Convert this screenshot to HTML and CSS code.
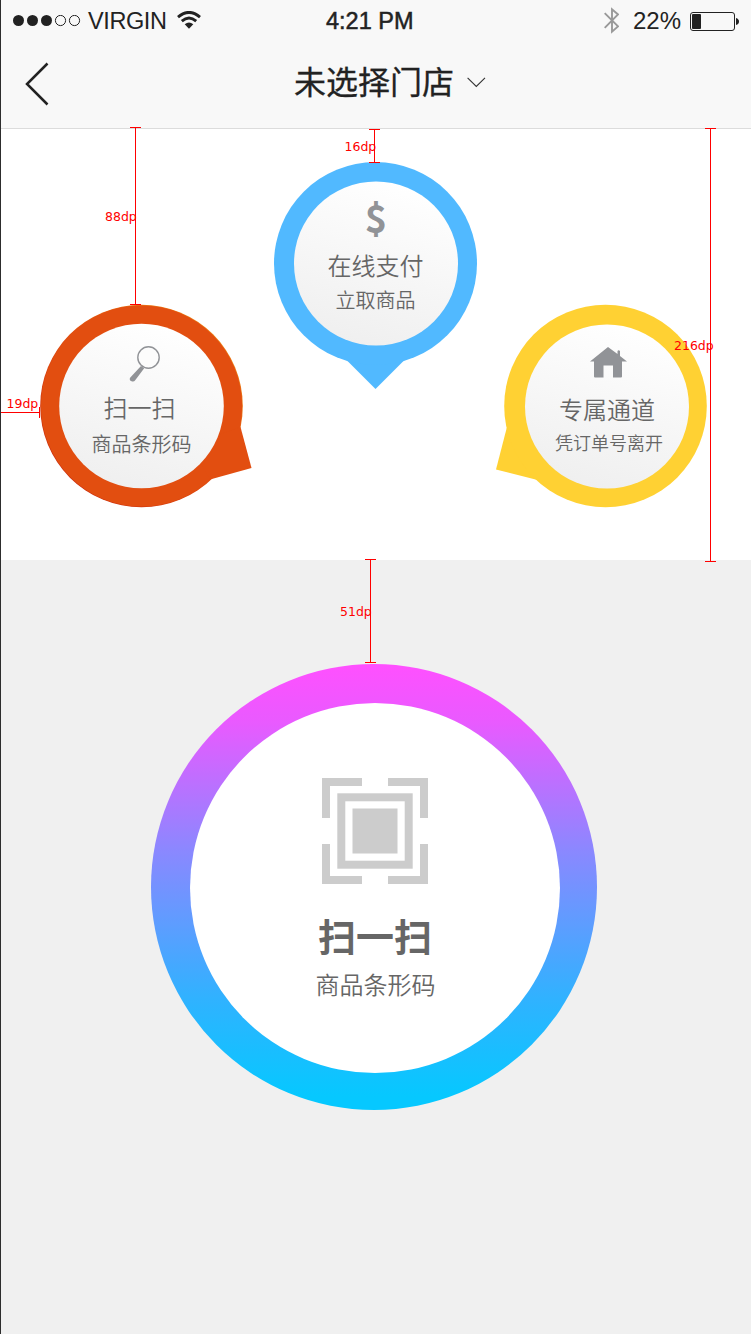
FILE: index.html
```html
<!DOCTYPE html>
<html lang="zh-CN">
<head>
<meta charset="utf-8">
<title>未选择门店</title>
<link rel="stylesheet" href="styles.css">
</head>
<body>
<div class="screen">
  <header class="header">
    <div class="status">
      <div class="status-left">
        <svg class="signal" width="68" height="12" viewBox="0 0 68 12"><g fill="#222"><circle cx="5.500" cy="5.500" r="5.500"/><circle cx="19.500" cy="5.500" r="5.500"/><circle cx="33.500" cy="5.500" r="5.500"/></g><g fill="none" stroke="#222"><circle cx="47.500" cy="5.500" r="5.100"/><circle cx="61.500" cy="5.500" r="5.100"/></g></svg>
        <span class="carrier">VIRGIN</span>
        <svg class="wifi" width="24" height="18" viewBox="0 0 24 18"><g fill="none" stroke="#222" stroke-width="2.900"><path d="M1 6.100Q12 -3.300 23 6.100"/><path d="M4.800 10.200Q12 4 19.200 10.200"/></g><path d="M7.700 13.200Q12 9.800 16.300 13.200L12 17.800Z" fill="#222"/></svg>
      </div>
      <span class="clock">4:21 PM</span>
      <div class="status-right">
        <svg class="bluetooth" width="15" height="27" viewBox="0 0 15 27"><path d="M.7 6.200L14 19.400L8 24.600V2.400L14 7.500L.7 20.800" fill="none" stroke="#999" stroke-width="1.900"/></svg>
        <span class="percent">22%</span>
        <svg class="battery" width="49" height="19" viewBox="0 0 49 19"><rect x=".5" y=".5" width="44" height="18" rx="2.500" fill="none" stroke="#222"/><rect x="2" y="2" width="9" height="15" rx="1" fill="#222"/><path d="M46 6Q49 7 49 9.500T46 13Z" fill="#222"/></svg>
      </div>
    </div>
    <nav class="nav">
      <svg class="back" width="24" height="44" viewBox="0 0 24 44"><path d="M22.500 1.500L2 22L22.500 42.500" fill="none" stroke="#222" stroke-width="2.500"/></svg>
      <h1 class="title">未选择门店</h1>
      <svg class="chevron" width="19" height="11" viewBox="0 0 19 11"><path d="M.6 .8L9.300 9.500L18 .8" fill="none" stroke="#333" stroke-width="1.100"/></svg>
    </nav>
  </header>

  <section class="pins">
    <div class="pin pin-scan">
      <svg class="pin-shape" width="203" height="203" viewBox="0 0 203 203">
        <defs>
          <linearGradient id="disc" x1=".65" y1="0" x2=".35" y2="1"><stop offset="0" stop-color="#fff"/><stop offset="1" stop-color="#efefef"/></linearGradient>
          <linearGradient id="edge" x1="1" y1="0" x2="0" y2="1"><stop offset=".1" stop-color="#f08a18"/><stop offset=".5" stop-color="#e14f10"/><stop offset=".9" stop-color="#c8280c"/></linearGradient>
        </defs>
        <circle cx="101.500" cy="101" r="101.300" fill="url(#edge)"/>
        <circle cx="101.500" cy="101" r="100.600" fill="#e24e10"/>
        <path d="M200.500 122L211.500 163L170 174.500L150 140Z" fill="#e24e10"/>
        <circle cx="101.500" cy="101" r="82.300" fill="url(#disc)"/>
      </svg>
      <svg class="icon" width="32" height="36" viewBox="0 0 32 36"><circle cx="19.500" cy="11.500" r="10.700" fill="#fcfcfc" stroke="#919397" stroke-width="1.400"/><path d="M12 20L1.300 31.500Q-.3 34 2.500 35.300Q5 36 6 34.500L15.200 22.300Z" fill="#919397"/></svg>
      <span class="label">扫一扫</span>
      <span class="note">商品条形码</span>
    </div>
    <div class="pin pin-pay">
      <svg class="pin-shape" width="203" height="203" viewBox="0 0 203 203">
        <path d="M66 193.500Q70 195.500 73 198.500L101.500 227L130 198.500Q133 195.500 137 193.500L101 150Z" fill="#51b9ff"/>
        <circle cx="101.500" cy="101.500" r="101.500" fill="#51b9ff"/>
        <circle cx="102" cy="101.500" r="82" fill="url(#disc)"/>
      </svg>
      <span class="dollar">$</span>
      <span class="label">在线支付</span>
      <span class="note">立取商品</span>
    </div>
    <div class="pin pin-lane">
      <svg class="pin-shape" width="203" height="203" viewBox="0 0 203 203">
        <path d="M2.700 123L-8 164.500L33.500 175L50 140Z" fill="#ffd133"/>
        <circle cx="101.500" cy="101" r="101.300" fill="#ffd133"/>
        <circle cx="103" cy="101.500" r="82" fill="url(#disc)"/>
      </svg>
      <svg class="icon" width="37" height="31" viewBox="0 0 37 31"><path d="M18 0L27.500 7V4Q28.500 2.500 30 4V9L37 14.500H32V29.500Q32 30.500 31 30.500H23V18.500H13.500V30.500H5Q4 30.500 4 29.500V14.500H0Z" fill="#919397"/></svg>
      <span class="label">专属通道</span>
      <span class="note">凭订单号离开</span>
    </div>
  </section>

  <main class="stage">
    <div class="ring">
      <div class="ring-face">
        <svg class="scan" width="106" height="106" viewBox="0 0 106 106"><g fill="none" stroke="#ccc" stroke-width="8"><path d="M4 40V4H40M66 4H102V40M102 66V102H66M40 102H4V66"/><rect x="19.300" y="19.300" width="67.400" height="67.400"/></g><rect x="30.500" y="30.500" width="45" height="45" fill="#ccc"/></svg>
        <span class="ring-label">扫一扫</span>
        <span class="ring-note">商品条形码</span>
      </div>
    </div>
  </main>

  <svg class="rulers" width="751" height="1334" viewBox="0 0 751 1334">
    <g fill="none" stroke="#f00" shape-rendering="crispEdges">
      <path d="M135.500 127V305M130 127.500H141M130 304.500H141"/>
      <path d="M374.500 129V163M369 129.500H380M369 162.500H380"/>
      <path d="M710.500 128V562M705 128.500H716M705 561.500H716"/>
      <path d="M370.500 559V663M365 559.500H376M365 662.500H376"/>
      <path d="M1 412.500H40M.5 407V418M39.500 407V418"/>
    </g>
    <g class="ruler-text">
      <text x="105" y="221">88dp</text>
      <text x="344.500" y="151">16dp</text>
      <text x="674" y="350">216dp</text>
      <text x="340" y="616">51dp</text>
      <text x="6.500" y="408">19dp</text>
    </g>
  </svg>
</div>
</body>
</html>
```
FILE: styles.css
```css
* {
  box-sizing: border-box;
}

body {
  margin: 0;
  font-family: "Liberation Sans", "Noto Sans CJK SC", sans-serif;
  color: #222;
}

.screen {
  position: relative;
  width: 751px;
  height: 1334px;
  display: flex;
  flex-direction: column;
  overflow: hidden;
  border-left: 1px solid #2d2d2d;
  background: #f0f0f0;
}

.header {
  height: 129px;
  flex: none;
  background: #f8f8f8;
  border-bottom: 1px solid #dcdcdc;
}

.status {
  height: 41px;
  padding: 1px 12px 0;
  display: grid;
  grid-template-columns: 313px auto 1fr;
  align-items: center;
  font-size: 24px;
  line-height: 40px;
  white-space: nowrap;
}

.status-left,
.status-right {
  display: flex;
  align-items: center;
}

.status-right {
  justify-content: flex-end;
}

.carrier {
  margin: 0 10px 0 7px;
  font-size: 23.5px;
  letter-spacing: -0.4px;
}

.wifi {
  margin-top: -2px;
}

.clock {
  font-size: 23.5px;
  -webkit-text-stroke: 0.5px #222;
}

.bluetooth {
  margin: -1px 2px 0 0;
}

.percent {
  margin: 0 9px 0 12px;
}

.nav {
  height: 87px;
  display: flex;
  align-items: center;
  padding-left: 24px;
}

.back {
  margin-top: -2px;
}

.title {
  margin: -10px 13px 0 245px;
  font: 400 32px/48px "Noto Sans CJK SC", sans-serif;
  -webkit-text-stroke: 0.3px #222;
}

.chevron {
  margin-top: -4px;
}

.pins {
  height: 431px;
  flex: none;
  display: flex;
  align-items: flex-start;
  padding: 33px 0 0 39px;
  background: #fff;
}

.pin {
  position: relative;
  width: 203px;
  height: 203px;
  flex: none;
  display: flex;
  flex-direction: column;
  align-items: center;
  font-family: "Noto Sans CJK SC", sans-serif;
  color: #666;
  white-space: nowrap;
}

.pin-shape {
  position: absolute;
  inset: 0;
  overflow: visible;
}

.pin > :not(.pin-shape) {
  z-index: 1;
}

.pin-scan {
  margin-top: 143px;
  padding-top: 41px;
}

.pin-scan .icon {
  margin-left: 6px;
}

.pin-scan .label {
  margin: 7px 4px 0 0;
}

.pin-scan .note {
  margin-top: 4px;
}

.pin-pay {
  margin: 0 27px 0 31px;
  padding-top: 33px;
}

.pin-lane {
  margin-top: 143px;
  padding: 42px 0 0 5px;
}

.label {
  margin-top: 6px;
  font-size: 24px;
  font-weight: 350;
  line-height: 36px;
}

.note {
  font-size: 20px;
  font-weight: 350;
  line-height: 30px;
}

.dollar {
  height: 46px;
  margin-left: 1px;
  font: bold 38px/44px "Noto Sans CJK SC", sans-serif;
  color: #919397;
}

.pin-pay .note {
  margin-top: 2px;
}

.pin-lane .label {
  margin: 13px 2px 0 0;
}

.pin-lane .note {
  margin-left: 2px;
  font-size: 18px;
}

.stage {
  display: flex;
  padding: 104px 0 0 150px;
}

.ring {
  width: 446px;
  height: 446px;
  padding: 39px;
  border-radius: 50%;
  background: linear-gradient(#ff50ff 0%, #e95aff 13%, #8a88ff 42%, #30b2ff 75%, #06c8ff 97%);
}

.ring-face {
  width: 370px;
  height: 370px;
  padding-top: 75px;
  display: flex;
  flex-direction: column;
  align-items: center;
  border-radius: 50%;
  background: #fff;
  color: #666;
  font-family: "Noto Sans CJK SC", sans-serif;
}

.ring-label {
  margin-top: 23px;
  font-size: 38px;
  font-weight: 700;
  line-height: 56px;
}

.ring-note {
  margin: 3px 0 0 1px;
  font-size: 24px;
  font-weight: 350;
  line-height: 36px;
}

.rulers {
  position: absolute;
  top: 0;
  left: -1px;
  z-index: 2;
  pointer-events: none;
}

.ruler-text {
  fill: #f00;
  font: 12.5px "DejaVu Sans", sans-serif;
}
```
